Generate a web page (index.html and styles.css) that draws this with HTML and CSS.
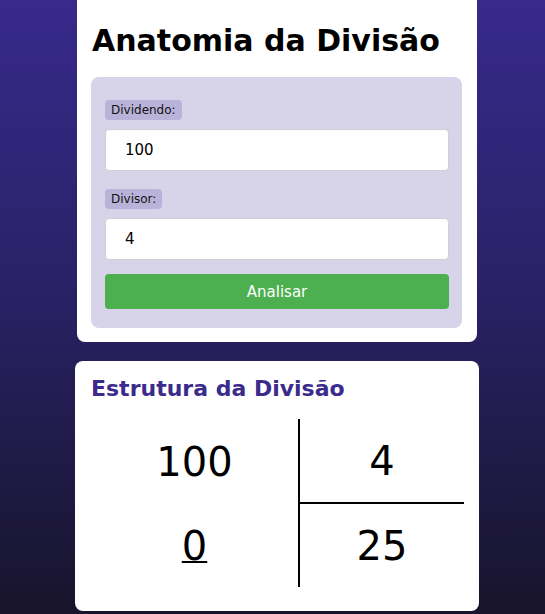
FILE: index.html
```html
<!DOCTYPE html>
<html lang="pt">
<head>
<meta charset="utf-8">
<title>Anatomia da Divisão</title>
<link rel="stylesheet" href="styles.css">
</head>
<body>
<div class="page">
  <section class="card card-form">
    <h1 class="title">Anatomia da Divisão</h1>
    <div class="panel">
      <label class="badge" for="dividendo">Dividendo:</label>
      <input class="field" id="dividendo" type="text" value="100">
      <label class="badge badge-2" for="divisor">Divisor:</label>
      <input class="field" id="divisor" type="text" value="4">
      <button class="btn" type="button">Analisar</button>
    </div>
  </section>
  <section class="card card-result">
    <h2 class="subtitle">Estrutura da Divisão</h2>
    <div class="division">
      <div class="cell">100</div>
      <div class="cell cell-right cell-top">4</div>
      <div class="cell"><span class="under">0</span></div>
      <div class="cell cell-right">25</div>
    </div>
  </section>
</div>
</body>
</html>
```
FILE: styles.css
```css
* { box-sizing: border-box; }
html, body { margin: 0; padding: 0; }
body {
  width: 545px;
  height: 614px;
  overflow: hidden;
  background: linear-gradient(to bottom, #38298b 0%, #2a2268 45%, #17142b 100%);
  font-family: "DejaVu Sans", Verdana, sans-serif;
}
.page {
  display: flex;
  flex-direction: column;
  align-items: flex-start;
}
.card {
  background: #fff;
  border-radius: 8px;
}
.card-form {
  width: 400px;
  margin: -20px 0 0 77px;
  padding: 43px 15px 14px 14px;
}
.title {
  margin: 0 0 18px 1px;
  font-size: 30px;
  line-height: 36px;
  font-weight: bold;
  color: #000;
}
.panel {
  background: #d7d3e9;
  border-radius: 8px;
  padding: 23px 13px 19px 14px;
  display: flex;
  flex-direction: column;
  align-items: flex-start;
}
.badge {
  background: #b9b3da;
  border-radius: 4px;
  font-size: 12px;
  line-height: 20px;
  height: 20px;
  padding: 0 6px;
  color: #111;
}
.badge-2 { margin-top: 18px; }
.field {
  margin-top: 9px;
  width: 100%;
  height: 42px;
  border: 1px solid #cfcfd6;
  border-radius: 4px;
  background: #fff;
  padding: 0 19px;
  font-family: "DejaVu Sans", Verdana, sans-serif;
  font-size: 15px;
  color: #000;
  outline: none;
}
.btn {
  margin-top: 14px;
  width: 100%;
  height: 35px;
  border: none;
  border-radius: 4px;
  background: #4caf50;
  color: #fff;
  font-family: "DejaVu Sans", Verdana, sans-serif;
  font-size: 15px;
}
.card-result {
  width: 404px;
  margin: 19px 0 0 75px;
  padding: 13px 15px 24px 16px;
}
.subtitle {
  margin: 0 0 15px 0;
  font-size: 22px;
  line-height: 30px;
  font-weight: bold;
  color: #3a2b8c;
}
.division {
  display: grid;
  grid-template-columns: 207px 1fr;
  grid-template-rows: 85px 83px;
}
.cell {
  display: flex;
  align-items: center;
  justify-content: center;
  font-size: 40px;
  color: #000;
}
.cell-right { border-left: 2px solid #000; }
.cell-top { border-bottom: 2px solid #000; }
.under {
  text-decoration: underline;
  text-decoration-thickness: 2px;
}
```
